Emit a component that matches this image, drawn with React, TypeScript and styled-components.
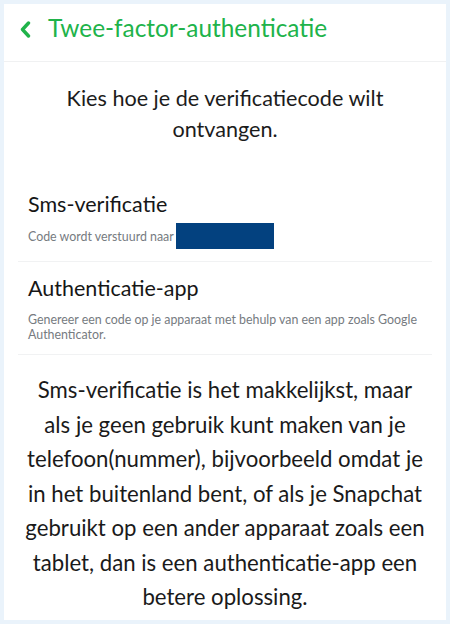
import React from 'react';
import styled, {createGlobalStyle} from "styled-components";

const GlobalStyle = createGlobalStyle`
  html, body {
    margin: 0;
    padding: 0;
    background: #eaf3fb;
  }
  body {
    font-family: "Lato", "Noto Sans", sans-serif;
    -webkit-font-smoothing: antialiased;
  }
`

const Page = styled.div`
  width: 450px;
  height: 624px;
  padding: 4px;
  box-sizing: border-box;
`

const Card = styled.div`
  height: 616px;
  background: #ffffff;
  display: flex;
  flex-direction: column;
`

const Header = styled.div`
  height: 58px;
  box-sizing: border-box;
  padding: 9px 0 0 16px;
  display: flex;
  align-items: flex-start;
  gap: 17px;
  border-bottom: 1px solid #f0f1f2;
`

const BackButton = styled.button`
  border: none;
  background: none;
  padding: 0;
  margin-top: 8px;
  width: 11px;
  height: 17px;
  display: flex;
  cursor: pointer;
`

const Title = styled.h1`
  margin: 0;
  font-size: 24.4px;
  line-height: 1.2;
  font-weight: 400;
  color: #20b34a;
`

const Intro = styled.p`
  margin: 21px 0 0;
  text-align: center;
  font-size: 21.6px;
  line-height: 31px;
  color: #1c1c1c;
`

const Options = styled.div`
  margin-top: 33px;
  display: flex;
  flex-direction: column;
`

const Option = styled.div`
  margin: 0 14px;
  padding: 13px 10px 12px;
  border-bottom: 1px solid #f1f2f3;
  cursor: pointer;
`

const OptionTitle = styled.div`
  font-size: 21.5px;
  line-height: 26px;
  color: #161616;
`

const OptionInfo = styled.div<{ $gap: number }>`
  margin-top: ${p => p.$gap}px;
  display: flex;
  align-items: center;
  flex-wrap: wrap;
  gap: 2px;
  font-size: 12.4px;
  line-height: 15px;
  color: #767b81;
`

const Redacted = styled.span`
  display: inline-block;
  width: 98px;
  height: 26px;
  background: #03417f;
`

const Explanation = styled.p`
  margin: 18px 0 0;
  text-align: center;
  font-size: 22.2px;
  line-height: 34.5px;
  color: #1a1a1a;
`

const ChevronLeft = () => (
    <svg width="11" height="17" viewBox="0 0 11 17">
        <polyline points="8.5,2 2.5,8.5 8.5,15" fill="none" stroke="#20b34a"
                  strokeWidth="3.4" strokeLinecap="round" strokeLinejoin="round"/>
    </svg>
)

const App = () => {
    return (
        <Page>
            <GlobalStyle/>
            <Card>
                <Header>
                    <BackButton aria-label="Terug"><ChevronLeft/></BackButton>
                    <Title>Twee-factor-authenticatie</Title>
                </Header>

                <Intro>
                    Kies hoe je de verificatiecode wilt<br/>
                    ontvangen.
                </Intro>

                <Options>
                    <Option>
                        <OptionTitle>Sms-verificatie</OptionTitle>
                        <OptionInfo $gap={6}>
                            Code wordt verstuurd naar <Redacted/>
                        </OptionInfo>
                    </Option>
                    <Option>
                        <OptionTitle>Authenticatie-app</OptionTitle>
                        <OptionInfo $gap={11}>
                            Genereer een code op je apparaat met behulp van een app zoals Google Authenticator.
                        </OptionInfo>
                    </Option>
                </Options>

                <Explanation>
                    Sms-verificatie is het makkelijkst, maar<br/>
                    als je geen gebruik kunt maken van je<br/>
                    telefoon(nummer), bijvoorbeeld omdat je<br/>
                    in het buitenland bent, of als je Snapchat<br/>
                    gebruikt op een ander apparaat zoals een<br/>
                    tablet, dan is een authenticatie-app een<br/>
                    betere oplossing.
                </Explanation>
            </Card>
        </Page>
    );
};

export default App;
